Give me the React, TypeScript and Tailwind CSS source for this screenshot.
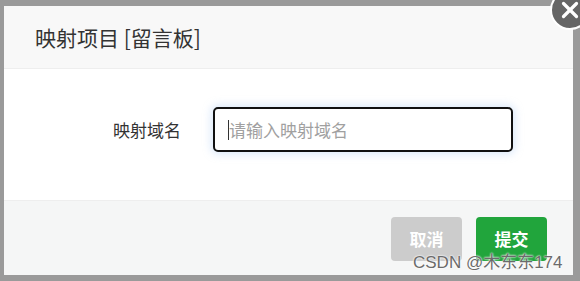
import { X } from 'lucide-react';

const cjk = "font-['Noto_Sans_CJK_SC','Liberation_Sans',sans-serif]";

const App = () => {
  return (
    <div className={`w-[580px] h-[281px] bg-[#9a9a9a] pt-[6px] pl-[4px] overflow-hidden ${cjk}`}>
      <div className="relative w-[569px] h-[269px] bg-white flex flex-col">
        {/* header */}
        <div className="h-[63px] shrink-0 bg-[#f8f8f8] border-b border-[#eeeeee] flex items-center pl-[31px]">
          <span className="text-[21px] leading-none text-[#333333]">映射项目 [留言板]</span>
        </div>

        {/* body */}
        <div className="h-[131px] shrink-0 flex items-start pt-[38px] pl-[109px]">
          <label className="w-[100px] h-[45px] flex items-center text-[17px] text-[#333333]">
            映射域名
          </label>
          <div className="w-[300px] h-[45px] rounded-[5px] border-2 border-[#111111] shadow-[0_0_8px_2px_rgba(150,190,240,0.35)] flex items-center pl-[13px] bg-white">
            <span className="w-px h-[20px] bg-[#333333]" />
            <span className="text-[17px] text-[#a0a0a0]">请输入映射域名</span>
          </div>
        </div>

        {/* footer */}
        <div className="flex-1 bg-[#f5f6f6] border-t border-[#eeeeee] flex justify-end items-start pt-[16px] pr-[26px] gap-[14px]">
          <button className="w-[71px] h-[44px] rounded-[4px] bg-[#cccccc] text-white font-bold text-[17px]">
            取消
          </button>
          <button className="w-[71px] h-[44px] rounded-[4px] bg-[#21a53c] text-white font-bold text-[17px]">
            提交
          </button>
        </div>

        {/* watermark */}
        <span className="absolute left-[409px] top-[248px] text-[17px] leading-none font-['Liberation_Sans','Noto_Sans_CJK_SC',sans-serif] text-[#6b6b6b] [text-shadow:0_0_2px_#fff,0_0_2px_#fff] whitespace-nowrap">
          CSDN @木东东174
        </span>

        {/* close */}
        <div className="absolute -right-[17px] -top-[16px] w-[40px] h-[40px] rounded-full bg-[#666666] border-2 border-white flex items-center justify-center">
          <X className="text-white" size={26} strokeWidth={3} />
        </div>
      </div>
    </div>
  );
};

export default App;
